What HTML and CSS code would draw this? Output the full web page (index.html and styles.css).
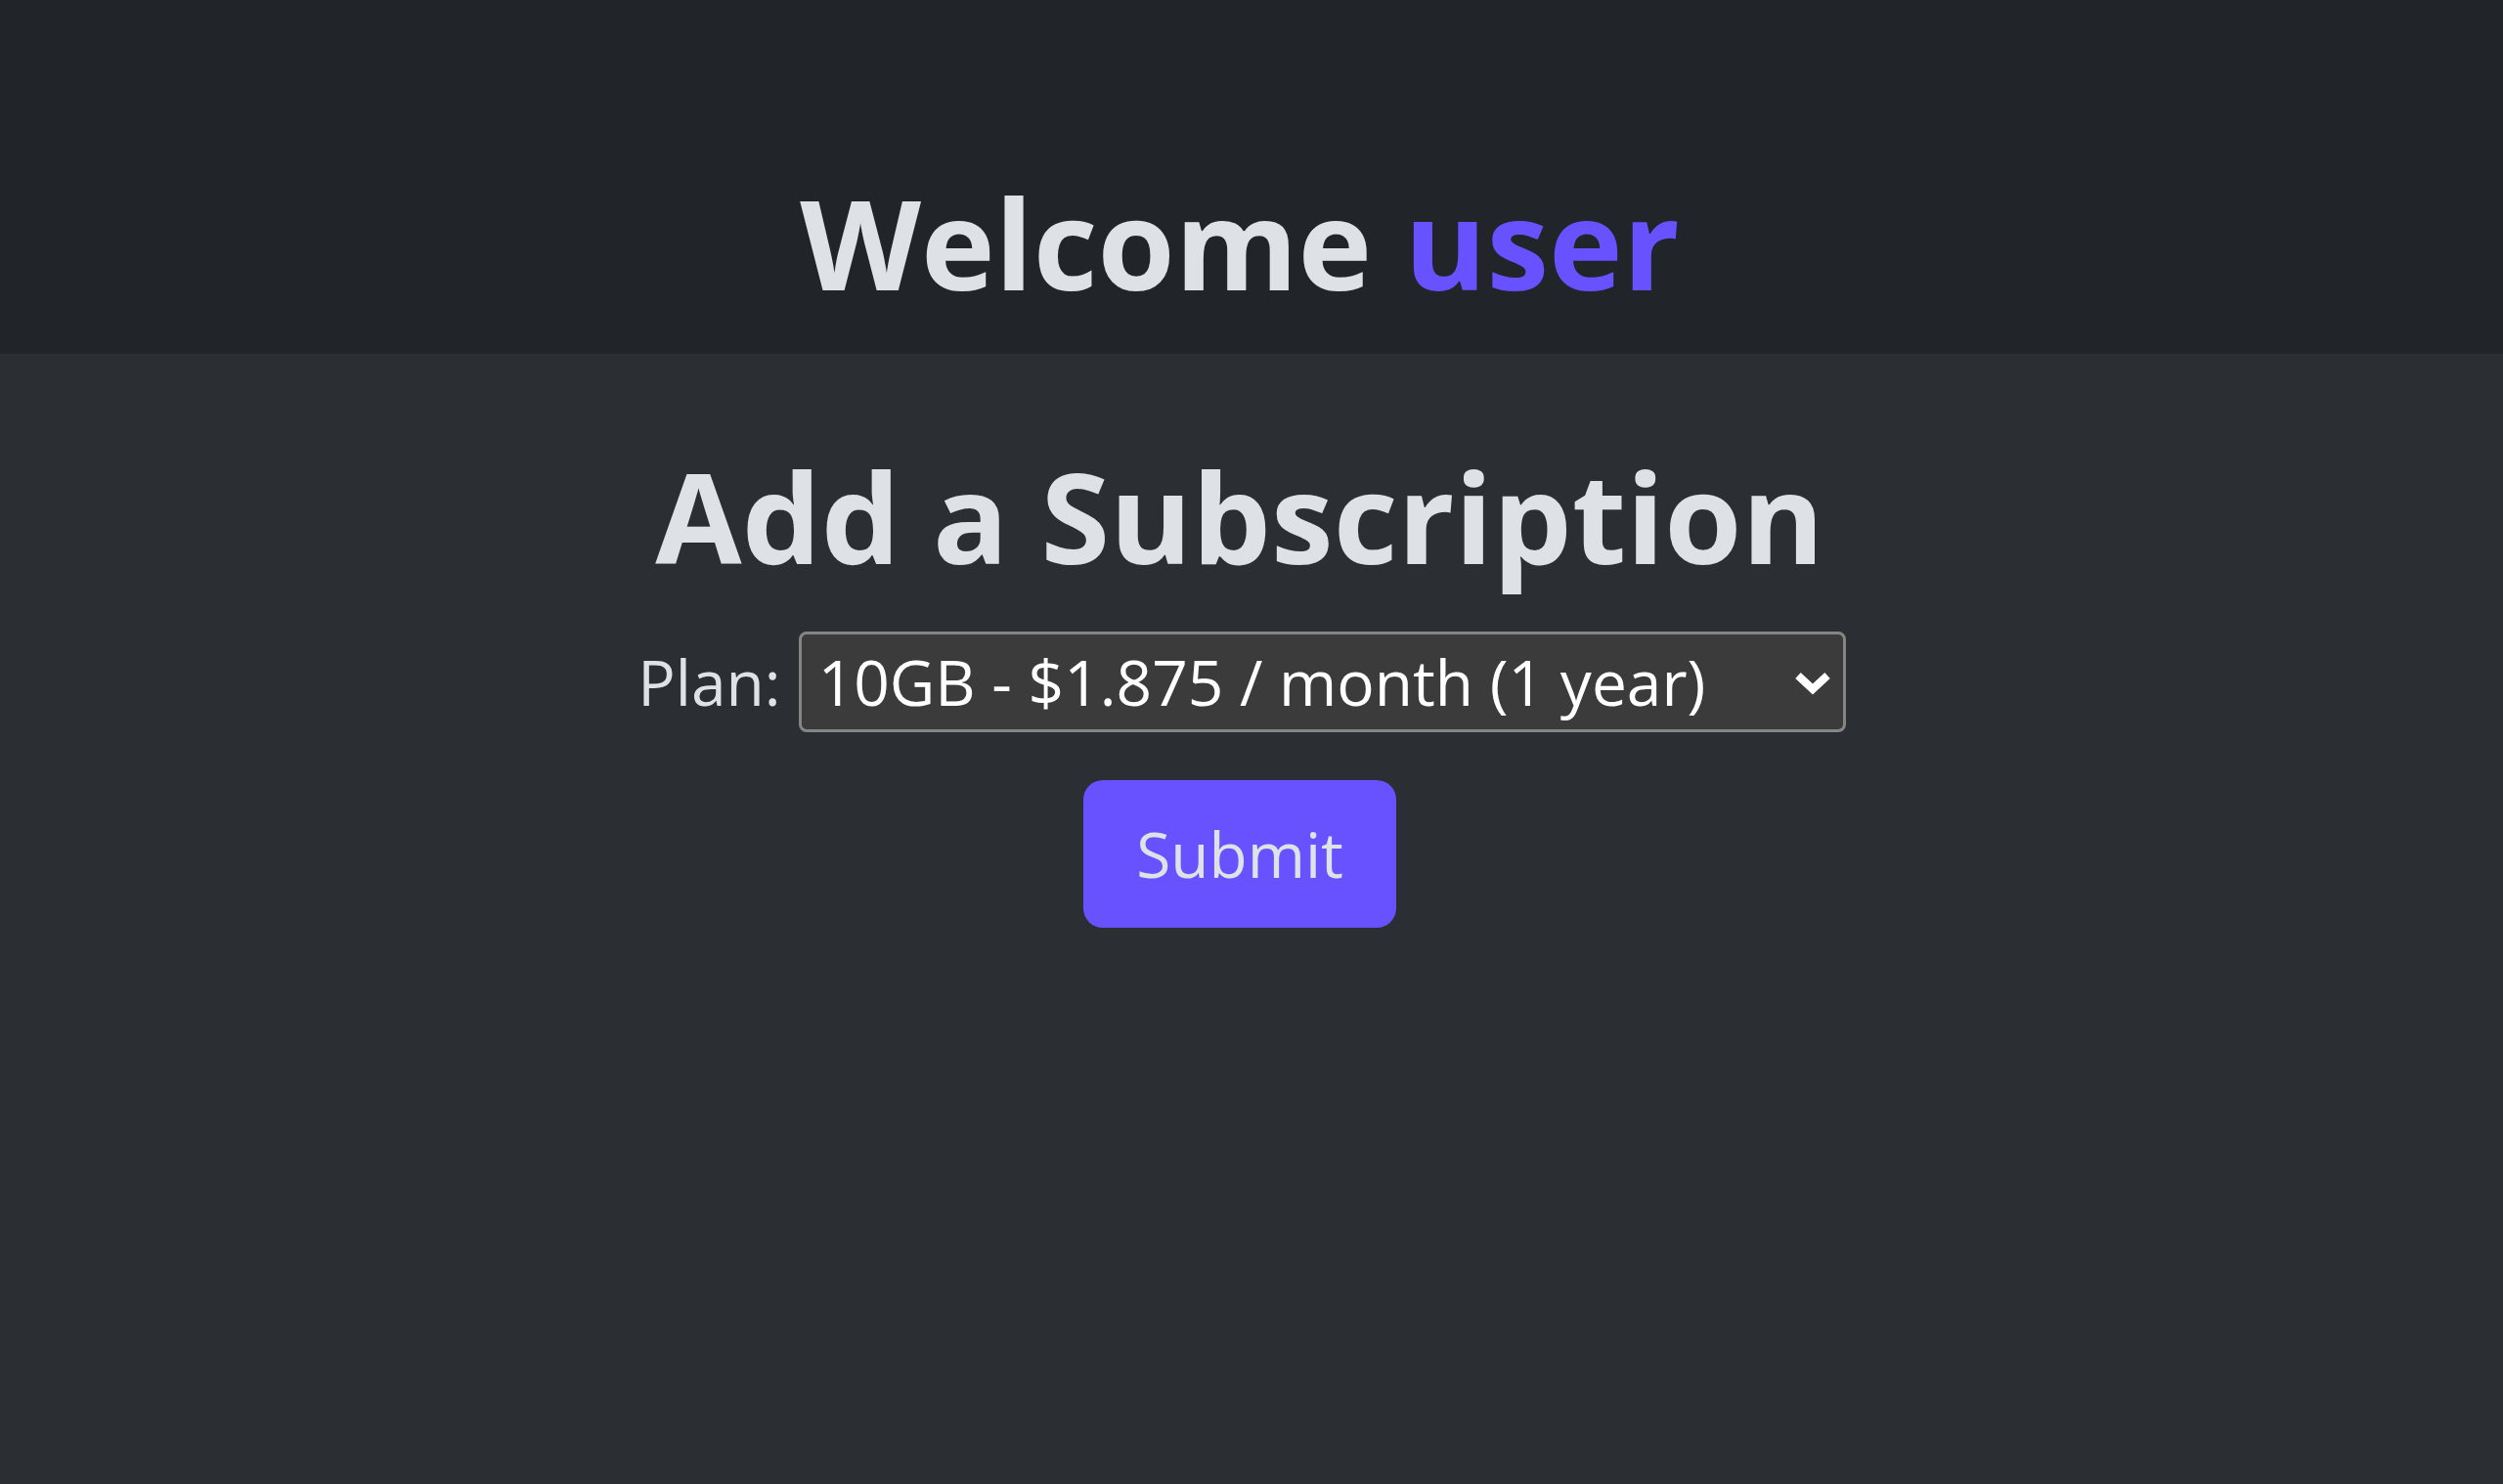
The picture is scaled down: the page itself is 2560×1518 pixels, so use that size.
FILE: index.html
```html
<!DOCTYPE html>
<html lang="en">
<head>
<meta charset="utf-8">
<title>Add a Subscription</title>
<link rel="stylesheet" href="styles.css">
</head>
<body>
<header class="top">
  <h1 class="welcome">Welcome <span class="accent">user</span></h1>
</header>
<main class="content">
  <h1 class="title">Add a Subscription</h1>
  <form class="form">
    <div class="row">
      <label class="label" for="plan">Plan:</label>
      <div class="select-wrap">
        <select id="plan" class="select">
          <option>10GB - $1.875 / month (1 year)</option>
        </select>
        <svg class="chev" viewBox="0 0 38 26" width="38" height="26" aria-hidden="true">
          <path d="M4 5 L19 19 L34 5" fill="none" stroke="#ffffff" stroke-width="8" stroke-linejoin="miter"/>
        </svg>
      </div>
    </div>
    <button type="button" class="btn">Submit</button>
  </form>
</main>
</body>
</html>
```
FILE: styles.css
```css
html, body {
  margin: 0;
  padding: 0;
  height: 100%;
}
body {
  background: #2b2f33;
  color: #dee2e6;
  font-family: "Open Sans", "Noto Sans", sans-serif;
}
.top {
  background: #212429;
  height: 362px;
  box-sizing: border-box;
  padding: 171px 24px 0 0;
  text-align: center;
}
.welcome, .title {
  margin: 0;
  font-size: 128px;
  font-weight: 700;
  line-height: 1.2;
  color: #dee2e6;
}
.accent {
  color: #6852ff;
}
.content {
  padding: 89px 24px 0 0;
  text-align: center;
}
.form {
  display: flex;
  flex-direction: column;
  align-items: center;
  margin-top: 41px;
}
.row {
  display: flex;
  align-items: center;
  justify-content: center;
  gap: 18px;
  padding-left: 4px;
}
.label {
  font-size: 64px;
  color: #dee2e6;
}
.select-wrap {
  position: relative;
  display: flex;
}
.select {
  appearance: none;
  -webkit-appearance: none;
  width: 1071px;
  height: 103px;
  box-sizing: border-box;
  border: 3px solid #858585;
  border-radius: 8px;
  background: #3b3b3b;
  color: #ffffff;
  font-family: "Open Sans", "Noto Sans", sans-serif;
  font-size: 64px;
  padding: 0 80px 0 17px;
  margin: 0;
}
.chev {
  position: absolute;
  right: 15px;
  top: 40px;
  pointer-events: none;
}
.btn {
  margin-top: 49px;
  background: #6852ff;
  color: #dee2e6;
  border: none;
  border-radius: 20px;
  font-family: "Open Sans", "Noto Sans", sans-serif;
  font-size: 64px;
  line-height: 1.5;
  padding: 28px 54px 27px;
}
```
